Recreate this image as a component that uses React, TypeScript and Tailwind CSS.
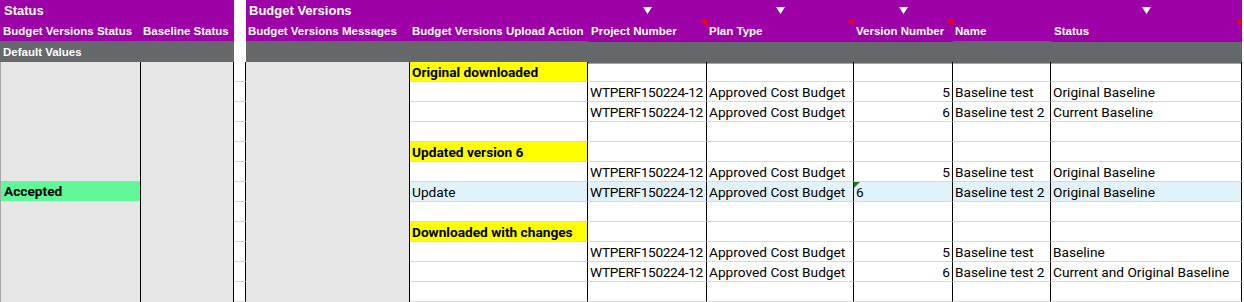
import React from "react";

type Row = {
  label?: string;
  action?: string;
  project?: string;
  plan?: string;
  version?: string;
  name?: string;
  status?: string;
  textVersion?: boolean;
  active?: boolean;
};

const P = "WTPERF150224-12";
const PT = "Approved Cost Budget";

const ROWS: Row[] = [
  { label: "Original downloaded" },
  { project: P, plan: PT, version: "5", name: "Baseline test", status: "Original Baseline" },
  { project: P, plan: PT, version: "6", name: "Baseline test 2", status: "Current Baseline" },
  {},
  { label: "Updated version 6" },
  { project: P, plan: PT, version: "5", name: "Baseline test", status: "Original Baseline" },
  { action: "Update", project: P, plan: PT, version: "6", name: "Baseline test 2", status: "Original Baseline", textVersion: true, active: true },
  {},
  { label: "Downloaded with changes" },
  { project: P, plan: PT, version: "5", name: "Baseline test", status: "Baseline" },
  { project: P, plan: PT, version: "6", name: "Baseline test 2", status: "Current and Original Baseline" },
  {},
];

const COLS = "grid grid-cols-[141px_93px_12px_164px_178px_119px_147px_99px_98px_191px]";
const HEAD = "font-['Liberation_Sans',Arial,sans-serif] font-bold text-white";
const DATA = "font-['Roboto','Liberation_Sans',sans-serif] text-[13.7px] text-black";

function DownTri() {
  return (
    <svg width="9" height="7" viewBox="0 0 9 7" className="mt-[7px]">
      <polygon points="0,0 9,0 4.5,7" fill="#ffffff" />
    </svg>
  );
}

function RedTri() {
  return (
    <svg width="6" height="6" viewBox="0 0 6 6" className="absolute top-0 right-0">
      <polygon points="0,0 6,0 6,6" fill="#ff0000" />
    </svg>
  );
}

function Cell({ children, className = "" }: { children?: React.ReactNode; className?: string }) {
  return (
    <div className={`relative h-[20px] border-r border-b border-r-black border-b-[#d9d9d9] px-[2px] leading-[21px] whitespace-nowrap overflow-hidden ${className}`}>
      {children}
    </div>
  );
}

export default function App() {
  return (
    <div className="w-[1244px] h-[302px] bg-white overflow-hidden">
      {/* header row 1 */}
      <div className={`${COLS} h-[20px] ${HEAD} text-[13px] leading-[21px]`}>
        <div className="bg-[#9c00a6] pl-[4px] whitespace-nowrap">Status</div>
        <div className="bg-[#9c00a6]" />
        <div className="bg-white" />
        <div className="bg-[#9c00a6] pl-[3px] whitespace-nowrap overflow-visible">Budget Versions</div>
        <div className="bg-[#9c00a6]" />
        <div className="bg-[#9c00a6] flex justify-center"><DownTri /></div>
        <div className="bg-[#9c00a6] flex justify-center"><DownTri /></div>
        <div className="bg-[#9c00a6] flex justify-center"><DownTri /></div>
        <div className="bg-[#9c00a6]" />
        <div className="bg-[#9c00a6] flex justify-center"><DownTri /></div>
      </div>

      {/* header row 2 */}
      <div className={`${COLS} h-[19px] ${HEAD} text-[11.5px] leading-[22px]`}>
        <div className="bg-[#9c00a6] pl-[3px] whitespace-nowrap">Budget Versions Status</div>
        <div className="bg-[#9c00a6] pl-[2px] whitespace-nowrap">Baseline Status</div>
        <div className="bg-white" />
        <div className="bg-[#9c00a6] pl-[2px] whitespace-nowrap">Budget Versions Messages</div>
        <div className="bg-[#9c00a6] pl-[2px] whitespace-nowrap">Budget Versions Upload Action</div>
        <div className="relative bg-[#9c00a6] pl-[3px] whitespace-nowrap">Project Number<RedTri /></div>
        <div className="relative bg-[#9c00a6] pl-[2px] whitespace-nowrap">Plan Type<RedTri /></div>
        <div className="relative bg-[#9c00a6] pl-[2px] whitespace-nowrap">Version Number<RedTri /></div>
        <div className="bg-[#9c00a6] pl-[2px] whitespace-nowrap">Name</div>
        <div className="relative bg-[#9c00a6] pl-[3px] whitespace-nowrap">Status<RedTri /></div>
      </div>

      <div className="h-[2px]" />

      {/* default values band */}
      <div className={`${COLS} h-[21px] ${HEAD} text-[11.5px] leading-[22px]`}>
        <div className="col-span-2 bg-[#65686b] border-b border-[#a5a5a5] pl-[3px]">Default Values</div>
        <div className="bg-white" />
        <div className="col-span-7 bg-[#65686b] border-b border-[#a5a5a5]" />
      </div>

      {/* data */}
      <div className={`flex ${DATA}`}>
        <div className="w-[141px] h-[240px] flex flex-col border-l border-r border-l-[#a6a6a6] border-r-black bg-[#e6e6e6]">
          <div className="h-[119px]" />
          <div className="h-[20px] bg-[#60f898] font-bold pl-[3px] leading-[21px]">Accepted</div>
        </div>
        <div className="w-[93px] h-[240px] border-r border-black bg-[#e6e6e6]" />
        <div className="w-[12px] flex flex-col">
          {ROWS.map((_, i) => (
            <Cell key={i} />
          ))}
        </div>
        <div className="w-[164px] h-[240px] border-r border-black bg-[#e6e6e6]" />

        <div className="w-[178px] flex flex-col">
          {ROWS.map((r, i) => (
            <Cell
              key={i}
              className={r.label ? "bg-[#ffff00] font-bold" : r.active ? "bg-[#e1f2fb]" : ""}
            >
              {r.label ?? r.action}
            </Cell>
          ))}
        </div>
        <div className="w-[119px] flex flex-col tracking-[-0.35px]">
          {ROWS.map((r, i) => (
            <Cell key={i} className={r.active ? "bg-[#e1f2fb]" : ""}>{r.project}</Cell>
          ))}
        </div>
        <div className="w-[147px] flex flex-col">
          {ROWS.map((r, i) => (
            <Cell key={i} className={r.active ? "bg-[#e1f2fb]" : ""}>{r.plan}</Cell>
          ))}
        </div>
        <div className="w-[99px] flex flex-col">
          {ROWS.map((r, i) => (
            <Cell key={i} className={`${r.active ? "bg-[#e1f2fb]" : ""} ${r.textVersion ? "text-left" : "text-right"}`}>
              {r.textVersion && (
                <svg width="6" height="6" viewBox="0 0 6 6" className="absolute top-0 left-0">
                  <polygon points="0,0 6,0 0,6" fill="#1f7a1f" />
                </svg>
              )}
              {r.version}
            </Cell>
          ))}
        </div>
        <div className="w-[98px] flex flex-col">
          {ROWS.map((r, i) => (
            <Cell key={i} className={r.active ? "bg-[#e1f2fb]" : ""}>{r.name}</Cell>
          ))}
        </div>
        <div className="w-[191px] flex flex-col">
          {ROWS.map((r, i) => (
            <Cell key={i} className={r.active ? "bg-[#e1f2fb]" : ""}>{r.status}</Cell>
          ))}
        </div>
      </div>
    </div>
  );
}
